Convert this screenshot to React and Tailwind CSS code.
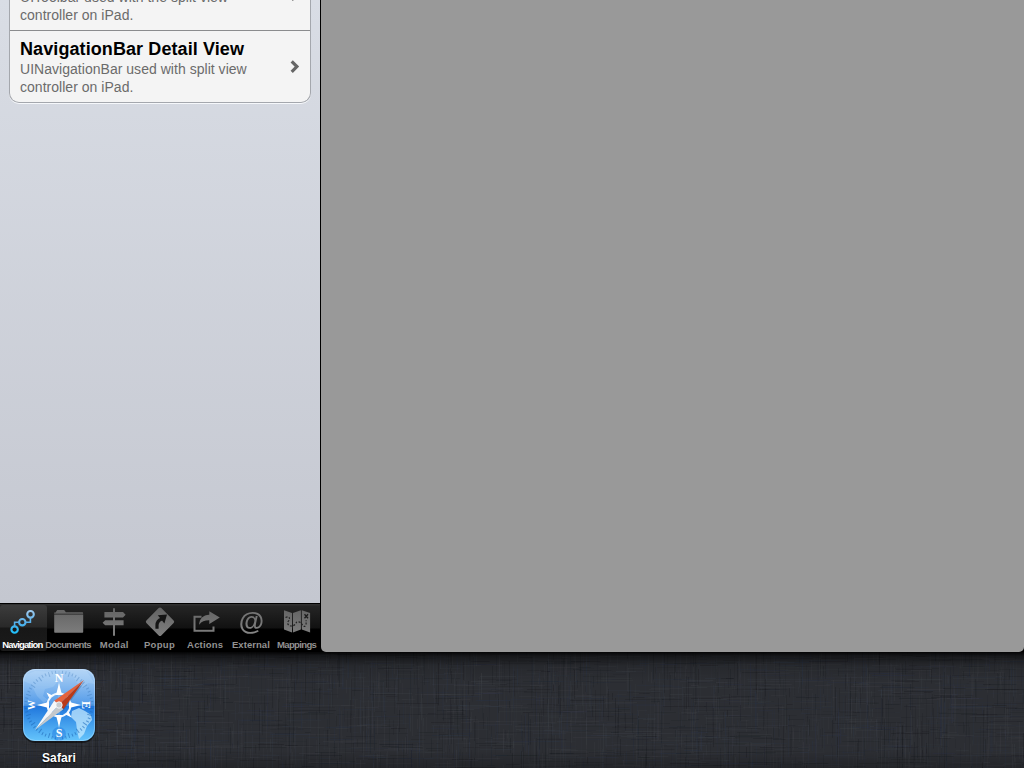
import React from "react";

function makeThreads() {
  let seed = 73;
  const rnd = () => {
    seed = (seed * 1664525 + 1013904223) % 4294967296;
    return seed / 4294967296;
  };
  const tones = ["#43464d", "#3a404e", "#0d0f14", "#15181e", "#283350", "#484a50"];
  const threads = [];
  for (let i = 0; i < 5200; i++) {
    const horizontal = rnd() < 0.5;
    const length = 5 + rnd() * 38;
    threads.push({
      x: Math.floor(rnd() * 1064) - 30,
      y: Math.floor(rnd() * 150) - 30,
      w: horizontal ? length : 1,
      h: horizontal ? 1 : length,
      fill: tones[Math.floor(rnd() * tones.length)],
      opacity: (0.05 + rnd() * 0.17).toFixed(2),
    });
  }
  return threads;
}
const threads = makeThreads();

function Linen() {
  return (
    <svg className="absolute inset-0 h-[116px] w-[1024px]" viewBox="0 0 1024 116" aria-hidden="true">
      <defs>
        <linearGradient id="linenShade" x1="0" y1="0" x2="0" y2="1">
          <stop offset="0" stopColor="#000" stopOpacity=".9" />
          <stop offset=".035" stopColor="#000" stopOpacity=".5" />
          <stop offset=".12" stopColor="#000" stopOpacity=".12" />
          <stop offset=".25" stopColor="#000" stopOpacity="0" />
          <stop offset=".85" stopColor="#000" stopOpacity="0" />
          <stop offset="1" stopColor="#000" stopOpacity=".2" />
        </linearGradient>
      </defs>
      <rect width="1024" height="116" fill="#2c2e33" />
      {threads.map((t, i) => (
        <rect key={i} x={t.x} y={t.y} width={t.w} height={t.h} fill={t.fill} opacity={t.opacity} />
      ))}
      <rect width="1024" height="116" fill="url(#linenShade)" />
    </svg>
  );
}

function TabIcon({ children }) {
  return (
    <svg className="h-8 w-9 shrink-0" viewBox="0 0 36 32" aria-hidden="true">
      {children}
    </svg>
  );
}

const NavigationIcon = () => (
  <TabIcon>
    <g fill="none" stroke="url(#tabBlue)">
      <path d="M9.6 21.4V17.2H14M20.5 17.2H25.4V12.8" strokeWidth="1.6" />
      <circle cx="9.6" cy="24.6" r="3.2" strokeWidth="2.1" />
      <circle cx="17.3" cy="17.2" r="3.2" strokeWidth="2.1" />
      <circle cx="25.5" cy="9.3" r="3.3" strokeWidth="2.1" />
    </g>
  </TabIcon>
);
const DocumentsIcon = () => (
  <TabIcon>
    <path d="M3.2 8.7V7.4h1.3l1.7-2.4h7l1.7 2.3H31.2q1 0 1 1.4z" fill="#666" />
    <path d="M3.2 9.6h29v17.4q0 .8-.8.8H4q-.8 0-.8-.8z" fill="url(#tabGray)" />
  </TabIcon>
);
const ModalIcon = () => (
  <TabIcon>
    <path
      d="M17 3.3h2v3.8h8l2.6 2.6-2.6 2.7h-8v2.9h8.6v5H19v10.5h-2V20.3H9.2l-2.6-2.5 2.6-2.5H17v-2.9H8.4V7.1H17z"
      fill="url(#tabGray)"
    />
  </TabIcon>
);
const PopupIcon = () => (
  <TabIcon>
    <path d="M16.7 3q1.3-1.2 2.6 0l12.3 12.6q1.2 1.2 0 2.4L19.3 30.4q-1.3 1.2-2.6 0L4.4 18q-1.2-1.2 0-2.4z" fill="url(#tabGray)" />
    <path d="M15 23.7v-3.5q0-4.4 4.6-6.2" fill="none" stroke="#151515" strokeWidth="3.2" />
    <path d="M15.8 10.3L25 9.6l-2.6 8.8z" fill="#151515" />
  </TabIcon>
);
const ActionsIcon = () => (
  <TabIcon>
    <path d="M13.5 11.8H6.5v13.9h19v-4.2" fill="none" stroke="url(#tabGray)" strokeWidth="2" />
    <path d="M21.3 6.3l10.5 6.2-10.5 6.4v-3.6c-4.4-.1-7.6 1-10.2 4.4.5-6 3.8-9.6 10.2-9.9z" fill="url(#tabGray)" />
  </TabIcon>
);
const MappingsIcon = () => (
  <TabIcon>
    <path d="M5 5.2l8 2.9v19.3l-8-2.9zM13.9 8.1l8-2.9v19.3l-8 2.9zM22.8 5.2l8.3 2.9v19.3l-8.3-2.9z" fill="url(#tabGray)" />
    <path d="M6.5 12.5c4-2 5 1 3 3.5s0 5 3 5 5-3 4.8-3.5 3.2-1 4.5.2 3 6 5.3 2.3v-4.7" fill="none" stroke="#222" strokeWidth="1.2" strokeDasharray="2 1.4" />
    <path d="M25.5 9.3l3.5 4m0-4l-3.5 4" stroke="#1b1b1b" strokeWidth="1.3" />
  </TabIcon>
);
const ExternalIcon = () => (
  <span className="h-8 bg-linear-to-b from-[#777777] via-[#757575] to-[#8c8c8c] bg-clip-text text-[26px] leading-[32px] font-bold text-transparent">
    @
  </span>
);

const tabs = [
  { label: "Navigation", Icon: NavigationIcon, spacing: "tracking-[-0.85px] -ml-0.5" },
  { label: "Documents", Icon: DocumentsIcon, spacing: "tracking-[-0.7px] -ml-px" },
  { label: "Modal", Icon: ModalIcon, spacing: "tracking-[0.35px]" },
  { label: "Popup", Icon: PopupIcon, spacing: "tracking-[0.3px] -ml-px" },
  { label: "Actions", Icon: ActionsIcon, spacing: "tracking-[0.2px] -ml-px" },
  { label: "External", Icon: ExternalIcon, spacing: "tracking-[0.05px] -ml-px" },
  { label: "Mappings", Icon: MappingsIcon, spacing: "tracking-[-0.65px] -ml-px" },
];

function TabBar() {
  return (
    <nav className="h-[49px] border-t border-black bg-[linear-gradient(#303030_0px,#303030_1px,#252525_2px,#111111_24px,#000000_25px)]">
      <svg className="absolute h-0 w-0" aria-hidden="true">
        <defs>
          <linearGradient id="tabGray" gradientUnits="userSpaceOnUse" x1="0" y1="4" x2="0" y2="30">
            <stop stopColor="#646464" />
            <stop offset="1" stopColor="#7e7e7e" />
          </linearGradient>
          <linearGradient id="tabBlue" gradientUnits="userSpaceOnUse" x1="0" y1="5" x2="0" y2="28">
            <stop stopColor="#a2cdf1" />
            <stop offset=".55" stopColor="#55aee9" />
            <stop offset="1" stopColor="#1fc0fb" />
          </linearGradient>
        </defs>
      </svg>
      <div className="grid h-12 grid-cols-7">
        {tabs.map(({ label, Icon, spacing }, i) => (
          <div
            key={label}
            className={
              i === 0
                ? "mt-px -mr-px flex h-[46px] flex-col items-center rounded-[3px] bg-[linear-gradient(#3c3c3c,#292929_22px,#171717_23px,#1b1b1b)] text-white"
                : "mt-px flex h-[46px] flex-col items-center text-[#929292]"
            }
          >
            <Icon />
            <span className={`mt-0.5 text-[9.5px] leading-3 font-bold whitespace-nowrap ${spacing}`}>{label}</span>
          </div>
        ))}
      </div>
    </nav>
  );
}

function Chevron() {
  return (
    <svg className="h-[14px] w-[10px] shrink-0" viewBox="0 0 10 14" aria-hidden="true">
      <path d="M1.7 1.4L6.9 6.6l-5.2 5.2" fill="none" stroke="#666" strokeWidth="3.2" />
    </svg>
  );
}

function Row({ title, detail }) {
  return (
    <div className="flex h-[72px] shrink-0 items-center justify-between border-t border-[#8b8c8e] pr-[10px] pl-[10px]">
      <div className="h-full">
        <h2 className="pt-[7px] text-[18px] leading-[22px] font-bold tracking-[0.09px] whitespace-nowrap text-black">{title}</h2>
        <p className="w-[250px] text-[14px] leading-[18px] tracking-[0.03px] text-[#6b6b6b]">{detail}</p>
      </div>
      <Chevron />
    </div>
  );
}

function SafariIcon() {
  const ticks = Array.from({ length: 60 }, (_, i) => i * 6);
  return (
    <svg className="h-[76px] w-[76px]" viewBox="0 0 76 76" aria-hidden="true">
      <defs>
        <linearGradient id="sky" x1="0" y1="0" x2="0" y2="1">
          <stop stopColor="#7db5ee" />
          <stop offset=".49" stopColor="#3c8ee6" />
          <stop offset=".52" stopColor="#2077dd" />
          <stop offset="1" stopColor="#65c5fc" />
        </linearGradient>
        <linearGradient id="gloss" x1="0" y1="0" x2="0" y2="1">
          <stop stopColor="#fff" stopOpacity=".36" />
          <stop offset="1" stopColor="#fff" stopOpacity=".12" />
        </linearGradient>
        <clipPath id="tile"><rect x="2" y="2" width="72" height="72" rx="12" /></clipPath>
      </defs>
      <rect x="1.5" y="3" width="73" height="73" rx="13" fill="#050608" opacity=".55" />
      <g clipPath="url(#tile)">
        <rect x="2" y="2" width="72" height="72" fill="url(#sky)" />
        <path d="M2 9l12-5 19 1 5 8-6 7-8 2-2 7 5 4-4 3-7-7-6-12-8-3zM48 2l17 1 9 14-7-1-4 5-7-5z" fill="#b7dafa" opacity=".22" />
        <path d="M51 44l7-3 6 3 6 4 1 5-5 6-3 8-5 5-2-9-1-8-5-5z" fill="#c7ecff" opacity=".72" />
        <g stroke="#1e68b7" strokeWidth="1" opacity=".58">
          {ticks.map((a) => (
            <line key={a} x1="38" y1="3.5" x2="38" y2={a % 18 === 0 ? "8.5" : "6.5"} transform={`rotate(${a} 38 38)`} />
          ))}
        </g>
        <circle cx="38" cy="67" r="7" fill="#2077dd" opacity=".45" />
        <path d="M2 2h72v35H2z" fill="url(#gloss)" />
        <path d="M38 2v72M2 38h72" stroke="#d7eeff" strokeWidth=".6" opacity=".6" />
        <circle cx="38" cy="38" r="11.5" fill="none" stroke="#eef7ff" strokeWidth="2" />
        <path d="M38 16l3 12h-6zM38 60l3-12h-6zM16 38l12-3v6zM60 38l-12-3v6zM25.5 25.5l6 3-3 3zM50.5 50.5l-6-3 3-3zM25.5 50.5l3-6 3 3z" fill="#fff" />
        <g fill="#fff" fontFamily="Liberation Serif, serif" fontWeight="700" fontSize="12" textAnchor="middle">
          <text x="38" y="15">N</text>
          <text x="38" y="69.5">S</text>
          <text transform="translate(10 38) rotate(-90)" y="4" fontSize="10">W</text>
          <text transform="translate(65 38) rotate(90)" y="4" fontSize="12">E</text>
        </g>
        <path d="M63 16L42 44l-6-6z" fill="#184777" opacity=".3" />
        <path d="M63 13L33.2 33.8 38 38z" fill="#e5623c" />
        <path d="M63 13L38 38l4.4 4.2z" fill="#b83a1a" />
        <path d="M14 63L33.2 33.8 38 38z" fill="#f6f7f8" />
        <path d="M14 63L38 38l4.4 4.2z" fill="#c4c8cb" />
        <circle cx="38" cy="38" r="3.2" fill="#c7ccd0" stroke="#fff" strokeWidth=".8" />
      </g>
      <rect x="2.5" y="2.5" width="71" height="71" rx="12" fill="none" stroke="#e4f3ff" strokeOpacity=".3" />
    </svg>
  );
}

export default function App() {
  return (
    <main className="flex h-[768px] w-[1024px] flex-col overflow-hidden bg-black font-['Liberation_Sans',Arial,sans-serif]">
      <div className="flex h-[652px] shrink-0">
        <aside className="flex w-80 shrink-0 flex-col">
          <section className="h-[603px] bg-linear-to-b from-[#d9dde5] to-[#c4c7d0] pl-[9px]">
            <div className="flex h-[103px] w-[302px] flex-col justify-end overflow-hidden rounded-b-[10px] border-x border-b border-[#a4a7ad] bg-[#f4f4f4] shadow-[0_1px_0_#f6f8fb]">
              <Row title="Toolbar Detail View" detail="UIToolbar used with the split view controller on iPad." />
              <Row title="NavigationBar Detail View" detail="UINavigationBar used with split view controller on iPad." />
            </div>
          </section>
          <TabBar />
        </aside>
        <section className="ml-px flex-1 rounded-b-[5px] bg-[#999999]" />
      </div>
      <footer className="relative h-[116px] shrink-0">
        <Linen />
        <div className="relative ml-[21px] flex w-[76px] flex-col items-center pt-[15px]">
          <SafariIcon />
          <span className="mt-2 text-[12px] leading-[14px] font-bold tracking-[0.1px] text-white [text-shadow:0_1px_2px_#000]">Safari</span>
        </div>
      </footer>
    </main>
  );
}
